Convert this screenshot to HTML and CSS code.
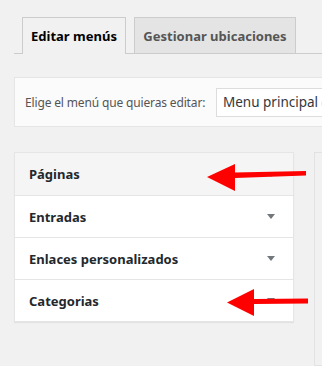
FILE: index.html
```html
<!DOCTYPE html>
<html lang="es">
<head>
<meta charset="utf-8">
<link rel="stylesheet" href="styles.css">
</head>
<body>
<div class="wrap">
  <nav class="tabs">
    <a class="tab active">Editar menús</a>
    <a class="tab">Gestionar ubicaciones</a>
  </nav>
  <div class="manage">
    <span class="label">Elige el menú que quieras editar:</span>
    <div class="select">Menu principal (Principal)</div>
  </div>
  <div class="columns">
    <div class="accordion">
      <div class="row open"><span>Páginas</span><i class="caret"></i></div>
      <div class="row"><span>Entradas</span><i class="caret"></i></div>
      <div class="row"><span>Enlaces personalizados</span><i class="caret"></i></div>
      <div class="row"><span>Categorias</span><i class="caret"></i></div>
    </div>
    <div class="right"></div>
  </div>
</div>
<svg class="arrows" width="322" height="366" viewBox="0 0 322 366">
  <path d="M235 172.5 L306 171 L306 175.5 L235 178 Z" fill="#f00"/>
  <path d="M207 177 L235 164 L235 191 Z" fill="#f00"/>
  <path d="M254 299 L308 298.5 L308 303.5 L254 304 Z" fill="#f00"/>
  <path d="M227 302.5 L254 289 L254 316 Z" fill="#f00"/>
</svg>
</body>
</html>
```
FILE: styles.css
```css
html, body {
  margin: 0;
  padding: 0;
  background: #f1f1f1;
  font-family: "Noto Sans", "DejaVu Sans", sans-serif;
  color: #23282d;
  overflow: hidden;
  height: 366px;
}
.wrap {
  padding-left: 14px;
  padding-top: 17px;
  width: 308px;
  overflow: hidden;
  height: 349px;
}
.tabs {
  display: flex;
  gap: 8px;
  padding-left: 8px;
  border-bottom: 1px solid #ccc;
  height: 36px;
}
.tab {
  box-sizing: border-box;
  flex: none;
  height: 37px;
  display: flex;
  align-items: center;
  justify-content: center;
  font-weight: 700;
  font-size: 13px;
  border: 1px solid #ccc;
  border-bottom: none;
  background: #e4e4e4;
  color: #555;
}
.tab.active {
  width: 104px;
  background: #f1f1f1;
  color: #000;
}
.tab:not(.active) {
  width: 162px;
  height: 36px;
}
.manage {
  margin-top: 23px;
  height: 50px;
  width: 330px;
  box-sizing: border-box;
  background: #fbfbfb;
  border: 1px solid #e5e5e5;
  display: flex;
  align-items: center;
  padding-left: 10px;
}
.label {
  flex: none;
  font-size: 12px;
  letter-spacing: -0.15px;
  white-space: nowrap;
  color: #555;
  width: 191px;
}
.select {
  flex: none;
  height: 29px;
  box-sizing: border-box;
  background: #fff;
  border: 1px solid #ddd;
  padding-left: 6px;
  display: flex;
  align-items: center;
  font-size: 13.5px;
  color: #32373c;
  white-space: nowrap;
  width: 120px;
  overflow: hidden;
}
.columns {
  margin-top: 25px;
  display: flex;
  gap: 20px;
}
.accordion {
  flex: none;
  width: 280px;
  box-shadow: 0 1px 1px rgba(0,0,0,.06);
  border: 1px solid #e5e5e5;
  box-sizing: border-box;
  background: #fff;
  align-self: flex-start;
}
.row {
  height: 42px;
  box-sizing: border-box;
  border-top: 1px solid #e5e5e5;
  display: flex;
  align-items: center;
  justify-content: space-between;
  padding: 0 18px 0 14px;
  font-weight: 700;
  font-size: 13px;
  color: #23282d;
}
.row:first-child { border-top: none; }
.row.open { background: #f5f5f5; }
.caret {
  width: 0;
  height: 0;
  border-left: 4px solid transparent;
  border-right: 4px solid transparent;
  border-top: 5px solid #72777c;
}
.right {
  flex: none;
  width: 20px;
  height: 214px;
  background: #f1f1f1;
  border: 1px solid #e2e2e2;
  border-right: none;
  box-sizing: border-box;
}
.arrows {
  position: absolute;
  left: 0;
  top: 0;
}
```
